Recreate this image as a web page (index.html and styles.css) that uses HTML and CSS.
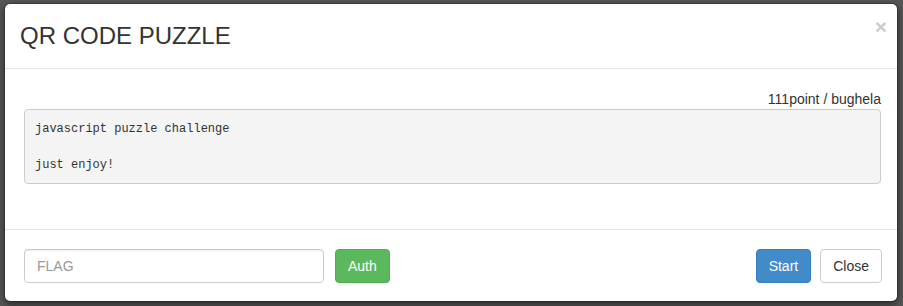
FILE: index.html
```html
<!DOCTYPE html>
<html>
<head>
<meta charset="utf-8">
<link rel="stylesheet" href="styles.css">
</head>
<body>
<div class="modal">
  <div class="modal-header">
    <h3 class="modal-title">QR CODE PUZZLE</h3>
    <button class="close" type="button">&times;</button>
  </div>
  <div class="modal-body">
    <div class="meta">111point / bughela</div>
    <pre class="desc">javascript puzzle challenge

just enjoy!</pre>
  </div>
  <div class="modal-footer">
    <div class="group">
      <input class="form-control" type="text" placeholder="FLAG">
      <button class="btn btn-success" type="button">Auth</button>
    </div>
    <div class="group right">
      <button class="btn btn-primary" type="button">Start</button>
      <button class="btn btn-default" type="button">Close</button>
    </div>
  </div>
</div>
</body>
</html>
```

FILE: styles.css
```css
* { box-sizing: border-box; }
html, body { margin: 0; padding: 0; }
body {
  background: #575757;
  font-family: "Liberation Sans", Arial, sans-serif;
  font-size: 14px;
  line-height: 20px;
  color: #333;
  height: 306px;
  overflow: hidden;
  padding-top: 3px;
  padding-left: 4px;
}
.modal {
  width: 894px;
  background: #fff;
  border: 1px solid rgba(0,0,0,.2);
  border-radius: 6px;
  box-shadow: 0 3px 9px rgba(0,0,0,.5);
  background-clip: padding-box;
}
.modal-header {
  display: flex;
  justify-content: space-between;
  align-items: flex-start;
  padding: 15px;
  border-bottom: 1px solid #e5e5e5;
}
.modal-title {
  margin: 0;
  font-size: 24px;
  font-weight: 500;
  line-height: 34px;
  color: #333;
}
.close {
  border: 0;
  background: none;
  padding: 0;
  margin: -3px -5px 0 0;
  font-family: "Liberation Sans", Arial, sans-serif;
  font-size: 21px;
  font-weight: bold;
  line-height: 1;
  color: #000;
  opacity: .2;
}
.modal-body {
  padding: 20px 16px 45px 19px;
}
.meta {
  text-align: right;
  line-height: 20px;
}
.desc {
  margin: 0;
  padding: 9.5px 10px 9.5px;
  font-family: "Liberation Mono", "DejaVu Sans Mono", monospace;
  font-size: 12px;
  line-height: 18px;
  color: #333;
  background: #f4f4f4;
  border: 1px solid #ccc;
  border-radius: 4px;
}
.modal-footer {
  display: flex;
  justify-content: space-between;
  align-items: center;
  padding: 19px 15px 18px 19px;
  border-top: 1px solid #e5e5e5;
}
.group { display: flex; align-items: center; }
.form-control {
  width: 300px;
  height: 34px;
  padding: 6px 12px;
  font-family: "Liberation Sans", Arial, sans-serif;
  font-size: 14px;
  color: #555;
  border: 1px solid #ccc;
  border-radius: 4px;
  box-shadow: inset 0 1px 1px rgba(0,0,0,.075);
  margin-right: 11px;
  outline: none;
}
.form-control::placeholder { color: #999; }
.btn {
  height: 34px;
  padding: 6px 12px;
  font-family: "Liberation Sans", Arial, sans-serif;
  font-size: 14px;
  line-height: 20px;
  border: 1px solid transparent;
  border-radius: 4px;
}
.btn-success { background: #5cb85c; border-color: #4cae4c; color: #fff; }
.btn-primary { background: #428bca; border-color: #357ebd; color: #fff; margin-right: 9px; }
.btn-default { background: #fff; border-color: #ccc; color: #333; }
```
